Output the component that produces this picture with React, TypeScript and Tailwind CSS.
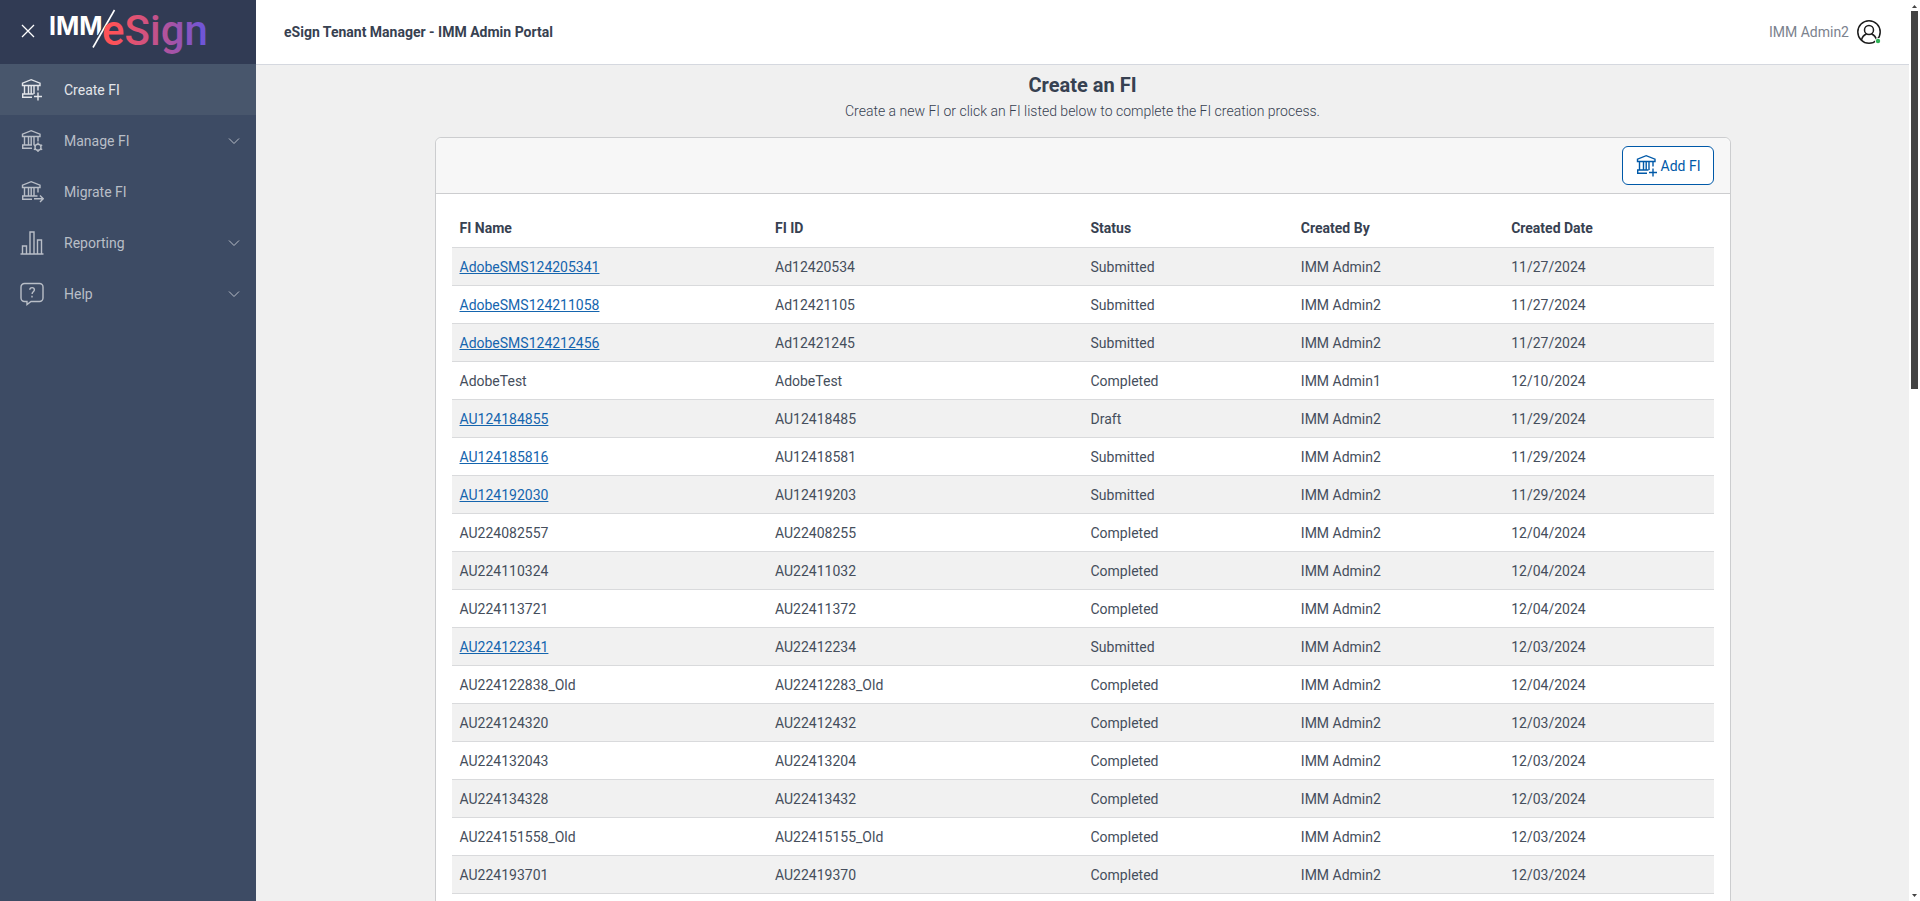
import { useState, type ReactNode } from "react";

type FI = { name: string; id: string; status: string; by: string; date: string };

const rows: FI[] = [
  { name: "AdobeSMS124205341", id: "Ad12420534", status: "Submitted", by: "IMM Admin2", date: "11/27/2024" },
  { name: "AdobeSMS124211058", id: "Ad12421105", status: "Submitted", by: "IMM Admin2", date: "11/27/2024" },
  { name: "AdobeSMS124212456", id: "Ad12421245", status: "Submitted", by: "IMM Admin2", date: "11/27/2024" },
  { name: "AdobeTest", id: "AdobeTest", status: "Completed", by: "IMM Admin1", date: "12/10/2024" },
  { name: "AU124184855", id: "AU12418485", status: "Draft", by: "IMM Admin2", date: "11/29/2024" },
  { name: "AU124185816", id: "AU12418581", status: "Submitted", by: "IMM Admin2", date: "11/29/2024" },
  { name: "AU124192030", id: "AU12419203", status: "Submitted", by: "IMM Admin2", date: "11/29/2024" },
  { name: "AU224082557", id: "AU22408255", status: "Completed", by: "IMM Admin2", date: "12/04/2024" },
  { name: "AU224110324", id: "AU22411032", status: "Completed", by: "IMM Admin2", date: "12/04/2024" },
  { name: "AU224113721", id: "AU22411372", status: "Completed", by: "IMM Admin2", date: "12/04/2024" },
  { name: "AU224122341", id: "AU22412234", status: "Submitted", by: "IMM Admin2", date: "12/03/2024" },
  { name: "AU224122838_Old", id: "AU22412283_Old", status: "Completed", by: "IMM Admin2", date: "12/04/2024" },
  { name: "AU224124320", id: "AU22412432", status: "Completed", by: "IMM Admin2", date: "12/03/2024" },
  { name: "AU224132043", id: "AU22413204", status: "Completed", by: "IMM Admin2", date: "12/03/2024" },
  { name: "AU224134328", id: "AU22413432", status: "Completed", by: "IMM Admin2", date: "12/03/2024" },
  { name: "AU224151558_Old", id: "AU22415155_Old", status: "Completed", by: "IMM Admin2", date: "12/03/2024" },
  { name: "AU224193701", id: "AU22419370", status: "Completed", by: "IMM Admin2", date: "12/03/2024" },
];

function Svg({ children }: { children: ReactNode }) {
  return (
    <svg viewBox="0 0 24 24" className="size-6 shrink-0" fill="none" stroke="currentColor" strokeWidth="1.4" aria-hidden="true">
      {children}
    </svg>
  );
}

// the bank building shared by every FI icon; the badge goes bottom right
function Bank({ children }: { children: ReactNode }) {
  return (
    <Svg>
      <path d="M2.5 7.5V5.2L11.2 1.7l8.8 3.5v2.3z" />
      <path d="M4.5 7.5V16M8.5 7.5V16M11.2 7.5V16M14 7.5V16M18 7.5v5" />
      {children}
    </Svg>
  );
}
function BankPlusIcon() {
  return (
    <Bank>
      <path d="M13.5 16H2.7v3.2H12M18 14.5v8M14 18.5h8" />
    </Bank>
  );
}
function BankGearIcon() {
  return (
    <Bank>
      <path d="M12 16H2.7v3.2H12" />
      <circle cx="18" cy="18.3" r="3" />
      <path d="M18 13.6v1.7M18 21.3V23M13.8 15.9l1.6.9M20.6 19.8l1.6.9M13.8 20.7l1.6-.9M20.6 16.8l1.6-.9" />
    </Bank>
  );
}
function BankArrowIcon() {
  return (
    <Bank>
      <path d="M17.5 16H2.7v3.2H12M14 18.8h9M20 15.6l3.2 3.2-3.2 3.2" />
    </Bank>
  );
}
function ChartIcon() {
  return (
    <Svg>
      <path d="M.5 23h23M2.5 23v-8h4v8M10 23V1h4v22M17.5 23V9h4v14" />
    </Svg>
  );
}
function HelpIcon() {
  return (
    <Svg>
      <path d="M4.5 1.5h15A3.5 3.5 0 0 1 23 5v11a3.5 3.5 0 0 1-3.5 3.5H11l-4 3v-3H4.5A3.5 3.5 0 0 1 1 16V5a3.5 3.5 0 0 1 3.5-3.5z" />
      <path d="M9.8 7.8c0-3 4.6-2.8 4.6 0 0 2-2.3 2-2.3 4.2M12 13.8v1.6" />
    </Svg>
  );
}
function ChevronIcon() {
  return (
    <svg viewBox="0 0 12 8" className="h-2 w-3" fill="none" stroke="currentColor" aria-hidden="true">
      <path d="M1 1.5l5 5 5-5" />
    </svg>
  );
}

function Logo() {
  return (
    <svg viewBox="0 0 160 56" className="h-14 w-40" role="img" aria-label="IMM eSign">
      <defs>
        <linearGradient id="esign" gradientUnits="userSpaceOnUse" x1="54" y1="0" x2="158" y2="0">
          <stop offset="0.1" stopColor="#ff5257" />
          <stop offset="0.5" stopColor="#c5528a" />
          <stop offset="1" stopColor="#6a56dc" />
        </linearGradient>
      </defs>
      <text x="1" y="31" fontSize="25" className="fill-white font-[Inter,sans-serif] font-bold">IMM</text>
      <path d="M45 43.5L66.500 6" stroke="#313b54" strokeWidth="4" />
      <path d="M45 43.5L66.500 6" stroke="#fff" strokeWidth="1.6" />
      <text x="54" y="41" fontSize="42" fill="url(#esign)" className="font-[Roboto,sans-serif] font-medium">eSign</text>
    </svg>
  );
}

const nav = [
  { label: "Create FI", icon: <BankPlusIcon />, expandable: false },
  { label: "Manage FI", icon: <BankGearIcon />, expandable: true },
  { label: "Migrate FI", icon: <BankArrowIcon />, expandable: false },
  { label: "Reporting", icon: <ChartIcon />, expandable: true },
  { label: "Help", icon: <HelpIcon />, expandable: true },
];

function Sidebar() {
  const [active, setActive] = useState("Create FI");
  return (
    <aside className="flex w-64 shrink-0 flex-col bg-[#3d4b64]">
      <div className="flex h-16 items-center gap-3 bg-[#313b54] pl-5 text-white">
        <button aria-label="Close menu" className="flex size-4 items-center justify-center">
          <svg viewBox="0 0 16 16" className="size-4" fill="none" stroke="currentColor" strokeWidth="1.3">
            <path d="M2 1l12 12M14 1L2 13" />
          </svg>
        </button>
        <Logo />
      </div>
      <nav>
        {nav.map((n) => (
          <button
            key={n.label}
            onClick={() => setActive(n.label)}
            className={`flex h-[51px] w-full items-center gap-5 pr-4 pl-5 text-left text-sm ${
              active === n.label ? "bg-[#48566c] text-[#e4e6ea]" : "text-[#b9bec7]"
            }`}
          >
            {n.icon}
            <span className="flex-1">{n.label}</span>
            {n.expandable && <ChevronIcon />}
          </button>
        ))}
      </nav>
    </aside>
  );
}

function Header() {
  return (
    <header className="flex h-[65px] shrink-0 items-center justify-between border-b border-[#d5d8df] bg-white px-7">
      <h1 className="text-sm font-bold">eSign Tenant Manager - IMM Admin Portal</h1>
      <button className="flex items-center gap-2 text-sm text-[#7b828e]">
        IMM Admin2
        <svg viewBox="0 0 24 24" className="size-6" fill="none" stroke="#1c1c1c" strokeWidth="1.5" aria-hidden="true">
          <circle cx="12" cy="12" r="11.2" />
          <circle cx="12" cy="10" r="4.5" />
          <path d="M4.5 20c.6-3.3 3-5.2 5-6M19.5 20c-.6-3.3-3-5.200-5-6" />
          <circle cx="21" cy="21" r="3" fill="#fff" stroke="none" />
          <circle cx="21" cy="21" r="2.2" fill="#2fb457" stroke="none" />
        </svg>
      </button>
    </header>
  );
}

function FITable() {
  return (
    <table className="w-full table-fixed text-left text-sm">
      <thead>
        <tr className="h-[37px] border-b border-[#d9dadc]">
          <th className="w-1/4 px-2 font-bold">FI Name</th>
          <th className="w-1/4 px-2 font-bold">FI ID</th>
          <th className="w-1/6 px-2 font-bold">Status</th>
          <th className="w-1/6 px-2 font-bold">Created By</th>
          <th className="w-1/6 px-2 font-bold">Created Date</th>
        </tr>
      </thead>
      <tbody className="text-[#454e5c]">
        {rows.map((r) => (
          <tr key={r.name} className="h-[38px] border-b border-[#d9dadc] odd:bg-[#f1f1f1]">
            <td className="px-2 pt-0.5">
              {r.status === "Completed" ? r.name : <a href="#" className="text-[#1565ae] underline">{r.name}</a>}
            </td>
            <td className="px-2 pt-0.5">{r.id}</td>
            <td className="px-2 pt-0.5">{r.status}</td>
            <td className="px-2 pt-0.5">{r.by}</td>
            <td className="px-2 pt-0.5">{r.date}</td>
          </tr>
        ))}
      </tbody>
    </table>
  );
}

function ScrollRail() {
  return (
    <div className="flex w-[11px] shrink-0 flex-col items-center bg-white" aria-hidden="true">
      <svg viewBox="0 0 7 11" className="h-[11px] w-[7px]" fill="#444">
        <path d="M1 8l2.5-3L6 8z" />
      </svg>
      <div className="flex-1 self-stretch px-[2px]">
        <div className="h-[43%] bg-[#444]" />
      </div>
      <svg viewBox="0 0 7 11" className="h-[11px] w-[7px]" fill="#444">
        <path d="M1 4l2.5 3L6 4z" />
      </svg>
    </div>
  );
}

export default function App() {
  return (
    <div className="flex h-screen overflow-hidden bg-[#f0f0f0] font-[Roboto,sans-serif] text-[#374151]">
      <Sidebar />
      <div className="flex min-w-0 flex-1 flex-col">
        <Header />
        <main className="flex-1 overflow-y-auto px-3 [scrollbar-width:none]">
          <div className="mx-auto max-w-[1296px]">
            <div className="pt-2 pb-4 text-center">
              <h2 className="text-xl leading-6 font-bold">Create an FI</h2>
              <p className="pt-1 text-sm leading-5 font-light">
                Create a new FI or click an FI listed below to complete the FI creation process.
              </p>
            </div>
            <section className="rounded-md border border-[#cccdcf] bg-white">
              <div className="flex justify-end rounded-t-md border-b border-[#cccdcf] bg-[#f7f7f7] px-4 py-2">
                <button className="flex h-[39px] items-center gap-0.5 rounded-md border border-[#0059a8] bg-white px-3 text-sm text-[#0059a8]">
                  <BankPlusIcon />
                  Add FI
                </button>
              </div>
              <div className="p-4">
                <FITable />
              </div>
            </section>
          </div>
        </main>
      </div>
      <ScrollRail />
    </div>
  );
}
